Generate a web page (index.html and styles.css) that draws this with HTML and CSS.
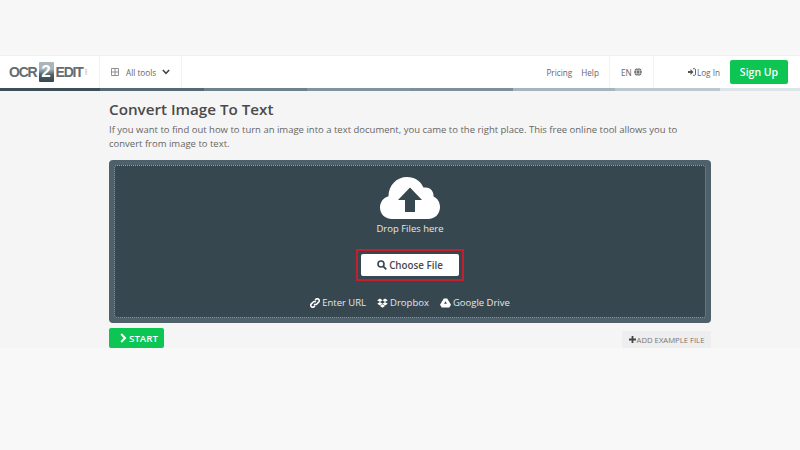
FILE: index.html
```html
<!DOCTYPE html>
<html lang="en">
<head>
<meta charset="utf-8">
<title>Convert Image To Text</title>
<link rel="stylesheet" href="styles.css">
</head>
<body>
<div class="top-gap"></div>
<div class="frame">
  <header class="header">
    <div class="logo"><span>OCR</span><span class="logo-two">2</span><span>EDIT</span><span class="logo-tld">.com</span></div>
    <div class="tools">
      <svg class="grid-icon" width="8" height="8" viewBox="0 0 8 8"><path d="M.5.5h7v7h-7zM.5 4h7M4 .5v7" fill="none" stroke="#777" stroke-width=".8"/></svg>
      <span>All tools</span>
      <svg class="chev" width="8" height="6" viewBox="0 0 8 6"><path d="M.8 1L4 4.300 7.200 1" fill="none" stroke="#444" stroke-width="1.500"/></svg>
    </div>
    <div class="spacer"></div>
    <nav class="links"><span>Pricing</span><span>Help</span></nav>
    <div class="lang"><span>EN</span>
      <svg width="8" height="8" viewBox="0 0 8 8"><circle cx="4" cy="4" r="3.800" fill="#666"/><path d="M0 2.700h8M0 5.300h8M4 0c-2.200 2.500-2.200 5.500 0 8M4 0c2.200 2.500 2.200 5.500 0 8" fill="none" stroke="#fff" stroke-width=".5"/></svg>
    </div>
    <div class="login">
      <svg width="8" height="8" viewBox="0 0 8 8"><path d="M0 3h2.500V1l3 3-3 3V5H0z" fill="#555"/><path d="M5 .7h1.500a1 1 0 0 1 1 1v4.600a1 1 0 0 1-1 1H5" fill="none" stroke="#555" stroke-width=".9"/></svg>
      <span>Log In</span>
    </div>
    <div class="signup">Sign Up</div>
  </header>
  <div class="rule"></div>
  <main class="main">
    <h1 class="title">Convert Image To Text</h1>
    <p class="intro">If you want to find out how to turn an image into a text document, you came to the right place. This free online tool allows you to convert from image to text.</p>
    <section class="drop">
      <div class="drop-inner">
        <svg class="cloud" width="60" height="42" viewBox="0 0 60 42"><path d="M12 42C5 42 0 37 0 30.500 0 25 3.500 20.500 8.500 19.200 8.500 8 17 0 27 0c7.500 0 13.500 4 16.500 10.500C51 9.500 54 15 53.500 19.500 57.500 21 60 25.500 60 30c0 7-5 12-12 12z" fill="#fff"/><path d="M27 10.500L39 23H32V35H22V23H15z" fill="#37474f" transform="translate(3 0)"/></svg>
        <div class="drop-text">Drop Files here</div>
        <div class="choose-ring">
          <div class="choose">
            <svg width="10" height="10" viewBox="0 0 10 10"><circle cx="4" cy="4" r="3" fill="none" stroke="#37474f" stroke-width="1.600"/><path d="M6.300 6.300L9.300 9.300" stroke="#37474f" stroke-width="1.900"/></svg>
            <span>Choose File</span>
          </div>
        </div>
        <div class="sources">
          <span class="source"><svg width="10" height="10" viewBox="0 0 11 11"><path d="M4.500 6.500a2 2 0 0 0 3 0l2-2a2 2 0 0 0-3-3L5.500 2.500M6.500 4.500a2 2 0 0 0-3 0l-2 2a2 2 0 0 0 3 3L5.500 8.500" fill="none" stroke="#fff" stroke-width="1.700"/></svg>Enter URL</span>
          <span class="source"><svg width="11" height="10" viewBox="0 0 11 10"><path d="M3 .5L5.500 2.200 3 4 .2 2.200zM8 .5L10.800 2.200 8 4 5.500 2.200zM3 4L5.500 5.800 3 7.500.2 5.800zM8 4l2.800 1.800L8 7.500 5.500 5.800zM3 8l2.500-1.700L8 8 5.500 9.700z" fill="#fff"/></svg>Dropbox</span>
          <span class="source"><svg width="11" height="10" viewBox="0 0 11 10"><path d="M3.800.5h3.400L11 6.800 9.300 9.500H1.700L0 6.800zM5.500 3.200L4 5.800h3z" fill="#fff" fill-rule="evenodd"/></svg>Google Drive</span>
        </div>
      </div>
    </section>
    <div class="actions">
      <div class="start">
        <svg width="7" height="10" viewBox="0 0 7 10"><path d="M1.200 1l3.800 4-3.800 4" fill="none" stroke="#fff" stroke-width="2"/></svg>
        <span>START</span>
      </div>
      <div class="example">
        <svg width="7" height="7" viewBox="0 0 7 7"><path d="M3.500 0v7M0 3.500h7" stroke="#444" stroke-width="1.800"/></svg>
        <span>ADD EXAMPLE FILE</span>
      </div>
    </div>
  </main>
</div>
</body>
</html>
```

FILE: styles.css
```css
* { box-sizing: border-box; }
html, body { margin: 0; padding: 0; }
body {
  width: 800px;
  height: 450px;
  overflow: hidden;
  background: #f8f8f8;
  font-family: "Open Sans", "Liberation Sans", sans-serif;
  color: #555;
}
.top-gap { height: 55px; background: #f7f7f7; }
.frame { height: 293px; overflow: hidden; background: #f5f5f5; }
.header {
  height: 33px;
  background: #fff;
  border-top: 1px solid #f0f0f0;
  display: flex;
  align-items: center;
  font-size: 8.200px;
  color: #666;
}
.logo {
  width: 100px;
  height: 100%;
  padding-left: 9px;
  display: flex;
  align-items: center;
  font-family: "Liberation Sans", sans-serif;
  font-weight: 700;
  font-size: 14px;
  letter-spacing: -1.200px;
  color: #666c70;
  border-right: 1px solid #f2f2f2;
}
.logo-two {
  width: 15px;
  height: 20px;
  margin: 0 2px;
  background: linear-gradient(#a9b5ba 0 35%, #4a5c66 65%, #37474f);
  color: #fff;
  display: flex;
  align-items: center;
  justify-content: center;
  font-size: 17px;
  letter-spacing: 0;
  border-radius: 1px;
}
.logo-tld {
  font-size: 3px;
  letter-spacing: 0;
  color: #bbb;
  writing-mode: vertical-rl;
  margin-left: 1px;
}
.tools {
  width: 82px;
  height: 100%;
  padding-left: 11px;
  display: flex;
  align-items: center;
  border-right: 1px solid #f2f2f2;
}
.grid-icon { margin-right: 7px; }
.chev { margin-left: 6px; }
.spacer { flex: 1; }
.links { display: flex; gap: 9px; padding-right: 10px; }
.lang {
  width: 45px;
  height: 100%;
  border-left: 1px solid #f2f2f2;
  border-right: 1px solid #f2f2f2;
  display: flex;
  align-items: center;
  justify-content: center;
  gap: 2px;
}
.login {
  display: flex;
  align-items: center;
  gap: 1px;
  margin: 0 10px 0 34px;
}
.signup {
  width: 58px;
  height: 24px;
  margin-right: 12px;
  border-radius: 2px;
  background: #0cc552;
  color: #fff;
  font-size: 10.500px;
  font-weight: 600;
  display: flex;
  align-items: center;
  justify-content: center;
}
.rule {
  height: 3px;
  background: linear-gradient(90deg, #3d4e58 0 100px, #566a75 100px 204px, #6b818e 204px 307px, #7f93a0 307px 410px, #7c8f9b 410px 513px, #a5b4be 513px 615px, #bcc8d0 615px 720px, #dee5e9 720px);
}
.main { width: 602px; margin: 0 auto 0 109px; }
.title {
  margin: 8px 0 0;
  font-size: 15.200px;
  line-height: 20px;
  font-weight: 600;
  color: #4a4a4a;
}
.intro {
  margin: 4px 0 0;
  font-size: 9.500px;
  line-height: 14px;
  color: #666;
}
.drop {
  height: 162.500px;
  margin-top: 9px;
  padding: 5px;
  border-radius: 4px;
  background: #4e606a;
}
.drop-inner {
  height: 100%;
  border: 1px dotted #93a3aa;
  border-radius: 3px;
  background: #37474f;
  display: flex;
  flex-direction: column;
  align-items: center;
  padding-top: 11px;
  color: #e4e8ea;
}
.cloud { display: block; }
.drop-text { font-size: 9.500px; line-height: 13px; margin-top: 3px; }
.choose-ring {
  margin-top: 14px;
  padding: 3px;
  border: 2px solid #c2202f;
  width: 108px;
  height: 32px;
}
.choose {
  height: 100%;
  background: #fff;
  border-radius: 2px;
  display: flex;
  align-items: center;
  justify-content: center;
  gap: 2px;
  font-size: 9.800px;
  font-weight: 600;
  color: #4a4a4a;
}
.sources {
  display: flex;
  gap: 11px;
  margin-top: 15px;
  font-size: 9.500px;
  line-height: 14px;
}
.source { display: flex; align-items: center; gap: 2px; }
.actions {
  display: flex;
  justify-content: space-between;
  align-items: flex-start;
  margin-top: 5.500px;
}
.start {
  width: 55px;
  height: 20px;
  padding-left: 5px;
  background: #0cc552;
  border-radius: 2px;
  color: #fff;
  font-size: 9.700px;
  font-weight: 600;
  display: flex;
  align-items: center;
  justify-content: center;
  gap: 2px;
}
.example {
  width: 89px;
  height: 17px;
  margin-top: 3px;
  background: #eeeeee;
  color: #777;
  font-size: 7.700px;
  display: flex;
  align-items: center;
  justify-content: center;
  gap: 1px;
}
```
